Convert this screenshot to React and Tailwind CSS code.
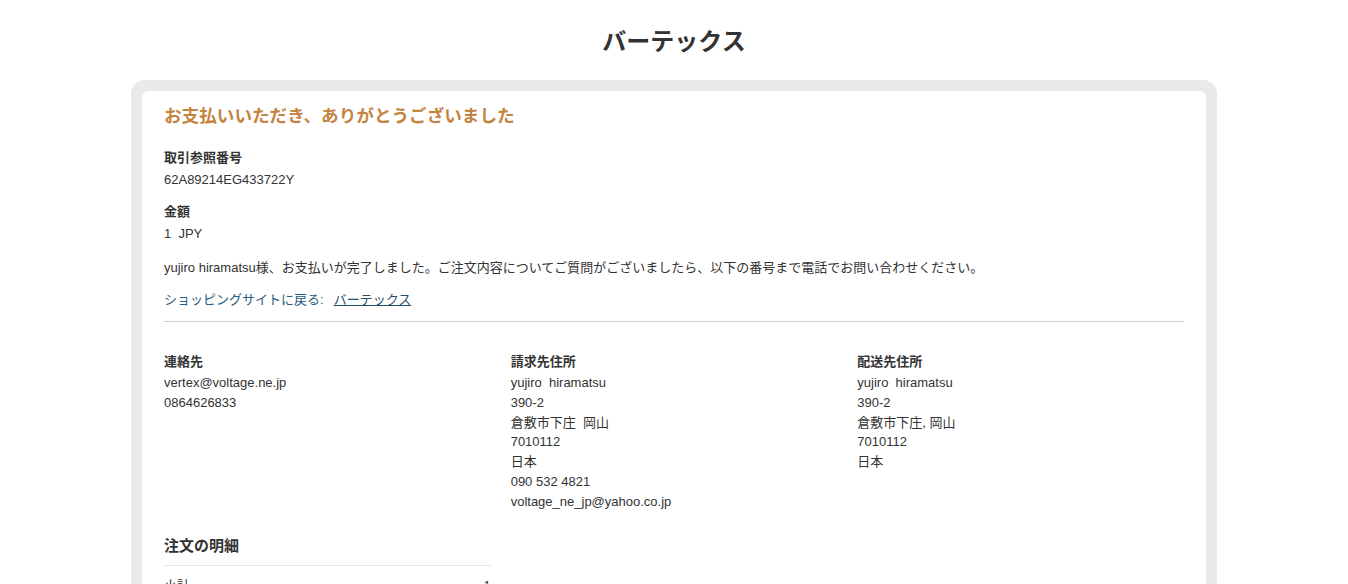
import React from "react";

const font = { fontFamily: '"Liberation Sans", Arial, "Noto Sans CJK JP", sans-serif' };

function Field({ label, value }) {
  return (
    <div>
      <div className="font-bold text-[13px] leading-[20px] text-[#333]">{label}</div>
      <div className="mt-[2px] text-[13px] leading-[20px] text-[#333]">{value}</div>
    </div>
  );
}

function Col({ title, lines }) {
  return (
    <div className="px-[10px]">
      <div className="font-bold text-[13px] leading-[20px] text-[#333]">{title}</div>
      <div className="mt-[1px] text-[13px] leading-[19.8px] text-[#333]">
        {lines.map((l, i) => (
          <div key={i} className="whitespace-pre">{l}</div>
        ))}
      </div>
    </div>
  );
}

export default function App() {
  return (
    <div className="min-h-[584px] bg-white text-[#333]" style={font}>
      <h1 className="pt-[27px] pb-[23px] text-center text-[24px] leading-[30px] font-bold text-[#333]">
        バーテックス
      </h1>
      <div className="mx-auto w-[1086px] rounded-[14px] bg-[#e9e9e9] p-[11px]">
        <div className="rounded-[6px] bg-white px-[22px] pt-[13px] pb-[30px]">
          <h2 className="text-[17.6px] leading-[24px] font-bold text-[#c4843f]">
            お支払いいただき、ありがとうございました
          </h2>
          <div className="mt-[20px]">
            <Field label="取引参照番号" value="62A89214EG433722Y" />
          </div>
          <div className="mt-[12px]">
            <Field label="金額" value={<span className="whitespace-pre">1  JPY</span>} />
          </div>
          <p className="mt-[14px] text-[13px] leading-[20px] text-[#333]">
            yujiro hiramatsu様、お支払いが完了しました。ご注文内容についてご質問がございましたら、以下の番号まで電話でお問い合わせください。
          </p>
          <p className="mt-[12px] text-[13px] leading-[20px] text-[#2a5d80]">
            ショッピングサイトに戻る:
            <a href="#" className="ml-[10px] underline text-[#1f4f6d]">
              バーテックス
            </a>
          </p>
          <div className="mt-[11px] border-t border-[#cfcfcf]" />
          <div className="-mx-[10px] mt-[30px] grid grid-cols-3">
            <Col title="連絡先" lines={["vertex@voltage.ne.jp", "0864626833"]} />
            <Col
              title="請求先住所"
              lines={[
                "yujiro  hiramatsu",
                "390-2",
                "倉敷市下庄  岡山",
                "7010112",
                "日本",
                "090 532 4821",
                "voltage_ne_jp@yahoo.co.jp",
              ]}
            />
            <Col
              title="配送先住所"
              lines={["yujiro  hiramatsu", "390-2", "倉敷市下庄, 岡山", "7010112", "日本"]}
            />
          </div>
          <div className="-mx-[10px] mt-[23px] grid grid-cols-3">
            <div className="px-[10px]">
              <h3 className="text-[15px] leading-[22px] font-bold text-[#333]">注文の明細</h3>
              <div className="mt-[8px] border-t border-[#e6e6e6]" />
              <div className="mt-[10px] flex justify-between text-[13px] leading-[20px] text-[#333]">
                <span>小計</span>
                <span>1</span>
              </div>
            </div>
          </div>
        </div>
      </div>
    </div>
  );
}
